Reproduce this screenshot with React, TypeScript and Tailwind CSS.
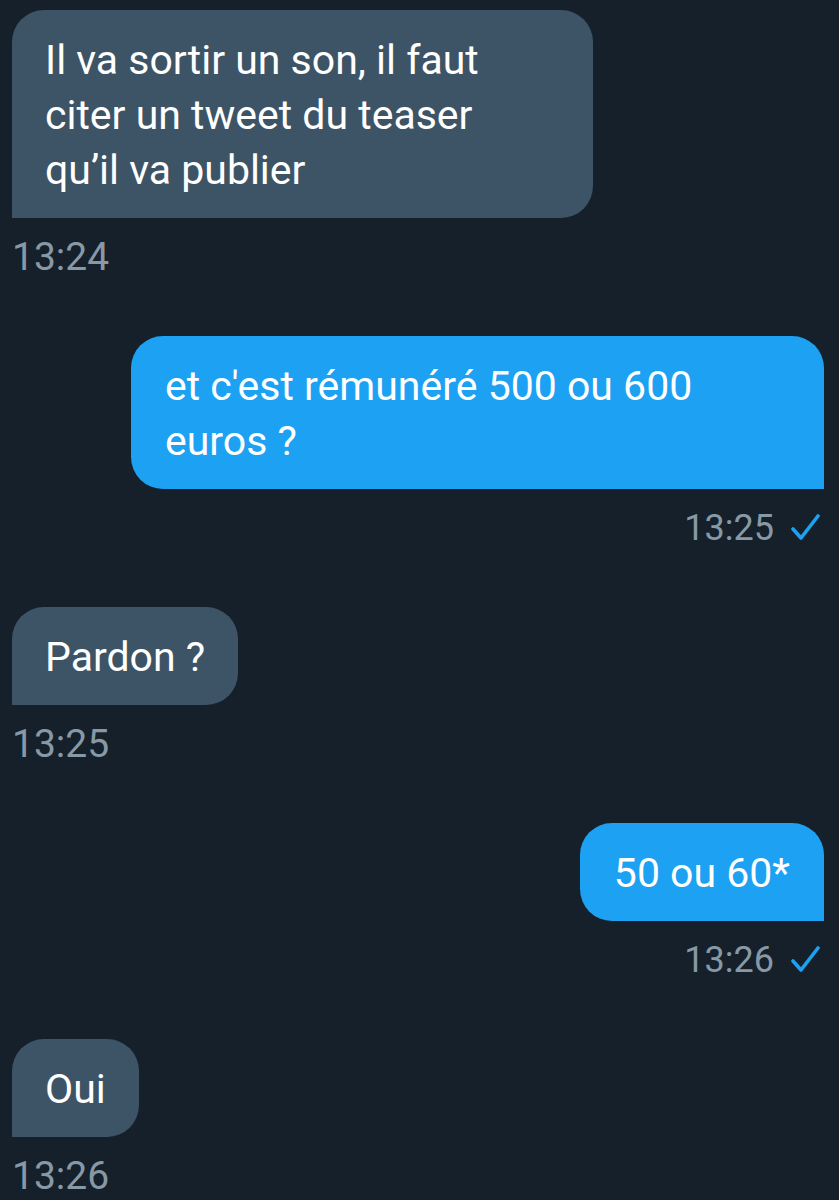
import React from "react";

function Check() {
  return (
    <svg width="32" height="28" viewBox="0 0 32 28" className="ml-[16px] mr-[2px]">
      <polyline
        points="3,15 11,24 28,2"
        fill="none"
        stroke="#1da1f2"
        strokeWidth="3.6"
        strokeLinecap="round"
        strokeLinejoin="round"
      />
    </svg>
  );
}

function Received({ text, w }: { text: React.ReactNode; w?: string }) {
  return (
    <div className="flex flex-col items-start">
      <div
        className={`bg-[#3d5466] text-white text-[41px] leading-[55px] rounded-[32px] rounded-bl-none px-[33px] pt-[23px] pb-[20px] ${w ?? ""}`}
      >
        {text}
      </div>
    </div>
  );
}

function Sent({ text, w }: { text: React.ReactNode; w?: string }) {
  return (
    <div className="flex flex-col items-end">
      <div
        className={`bg-[#1da1f2] text-white text-[41px] leading-[55px] rounded-[32px] rounded-br-none px-[34px] pt-[23px] pb-[20px] ${w ?? ""}`}
      >
        {text}
      </div>
    </div>
  );
}

function TimeL({ t }: { t: string }) {
  return (
    <div className="mt-[16px] mb-[56px] text-[39px] leading-[46px] text-[#8899a6]">{t}</div>
  );
}

function TimeR({ t }: { t: string }) {
  return (
    <div className="mt-[16px] mb-[56px] flex items-center justify-end text-[36px] leading-[46px] text-[#8899a6]">
      <span>{t}</span>
      <Check />
    </div>
  );
}

export default function App() {
  return (
    <div className="min-h-[1200px] h-[1200px] overflow-hidden bg-[#15202b] pt-[10px] pl-[12px] pr-[15px] font-['Roboto',sans-serif]">
      <Received
        w="w-[581px]"
        text={
          <>
            Il va sortir un son, il faut
            <br />
            citer un tweet du teaser
            <br />
            qu’il va publier
          </>
        }
      />
      <TimeL t="13:24" />
      <Sent
        w="w-[693px]"
        text={
          <>
            et c'est rémunéré 500 ou 600
            <br />
            euros ?
          </>
        }
      />
      <TimeR t="13:25" />
      <Received text="Pardon ?" />
      <TimeL t="13:25" />
      <Sent text="50 ou 60*" />
      <TimeR t="13:26" />
      <Received text="Oui" />
      <TimeL t="13:26" />
    </div>
  );
}
